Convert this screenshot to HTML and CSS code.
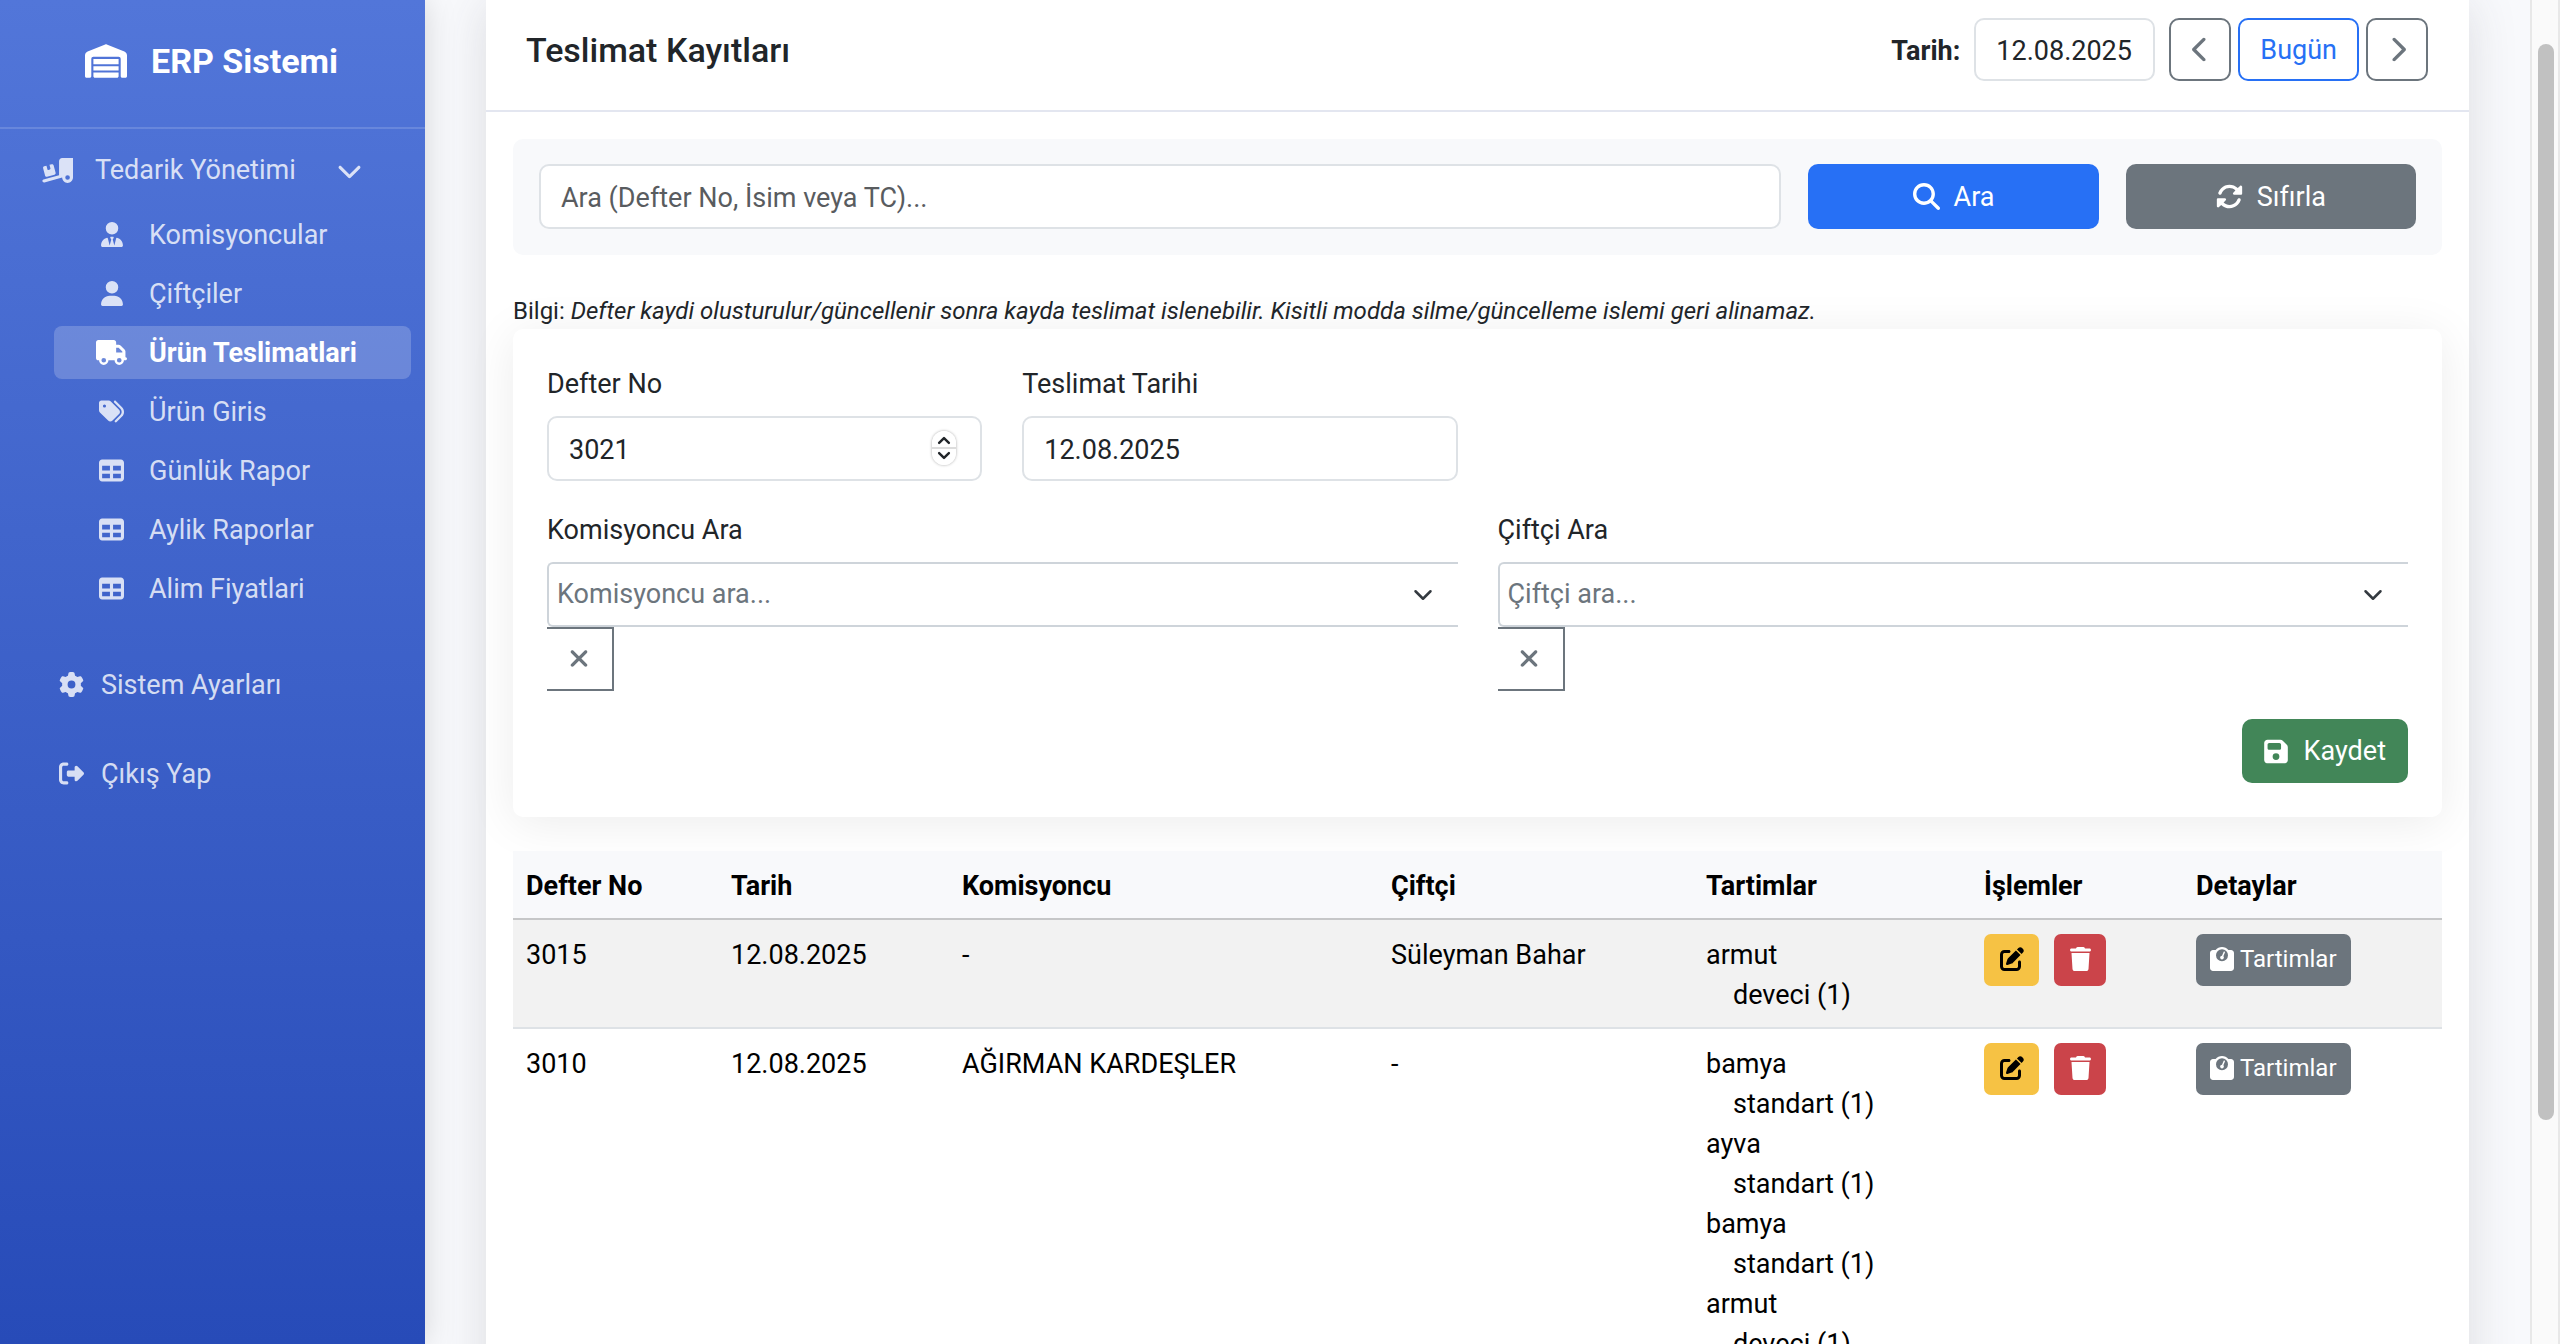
FILE: index.html
```html
<!DOCTYPE html>
<html lang="tr">
<head>
<meta charset="utf-8">
<title>ERP Sistemi</title>
<link rel="stylesheet" href="styles.css">
</head>
<body>
<svg class="sprite" aria-hidden="true">
<symbol id="warehouse" viewBox="0 0 640 512"><path d="M0 488V171.3c0-26.2 15.9-49.7 40.2-59.4L308.1 4.8c7.6-3.1 16.1-3.1 23.8 0L599.8 111.9c24.3 9.7 40.2 33.3 40.2 59.4V488c0 13.3-10.7 24-24 24H568c-13.3 0-24-10.7-24-24V224c0-17.7-14.3-32-32-32H128c-17.7 0-32 14.3-32 32V488c0 13.3-10.7 24-24 24H24c-13.3 0-24-10.7-24-24zm488 24l-336 0c-13.3 0-24-10.7-24-24V432H512l0 56c0 13.3-10.7 24-24 24zM128 400V336H512v64H128zm0-96V224H512l0 80H128z"/></symbol>
<symbol id="ramp" viewBox="0 0 640 512"><path d="M640 0V400c0 61.9-50.1 112-112 112c-61 0-110.5-48.7-112-109.3L48.4 502.9c-17.1 4.6-34.6-5.4-39.3-22.5s5.4-34.6 22.5-39.3L352 353.8V64c0-35.3 28.7-64 64-64H640zM576 400a48 48 0 1 0 -96 0 48 48 0 1 0 96 0zM23.1 207.7c-4.6-17.1 5.6-34.6 22.6-39.2l46.4-12.4 20.7 77.3c2.3 8.5 11.1 13.6 19.6 11.3l30.9-8.3c8.5-2.3 13.6-11.1 11.3-19.6l-20.7-77.3 46.4-12.4c17.1-4.6 34.6 5.6 39.2 22.6l41.4 154.5c4.6 17.1-5.6 34.6-22.6 39.2L103.7 384.9c-17.1 4.6-34.6-5.6-39.2-22.6L23.1 207.7z"/></symbol>
<symbol id="user-tie" viewBox="0 0 448 512"><path d="M224 256A128 128 0 1 1 224 0a128 128 0 1 1 0 256zM209.1 359.2l-18.6-31c-6.4-10.7 1.3-24.2 13.7-24.2H224h19.7c12.4 0 20.1 13.6 13.7 24.2l-18.6 31 33.4 123.9 36-146.9c2-8.1 9.8-13.4 17.9-11.3c70.1 17.6 121.9 81 121.9 156.4c0 17-13.8 30.7-30.7 30.7H285.5c-2.1 0-4-.4-5.8-1.1l.3 1.1H168l.3-1.1c-1.8 .7-3.8 1.1-5.8 1.1H30.7C13.8 512 0 498.2 0 481.3c0-75.5 51.9-138.9 121.9-156.4c8.1-2 15.9 3.3 17.9 11.3l36 146.9 33.4-123.9z"/></symbol>
<symbol id="user" viewBox="0 0 448 512"><path d="M224 256A128 128 0 1 0 224 0a128 128 0 1 0 0 256zm-45.7 48C79.8 304 0 383.8 0 482.3C0 498.7 13.3 512 29.7 512H418.3c16.4 0 29.7-13.3 29.7-29.7C448 383.8 368.2 304 269.7 304H178.3z"/></symbol>
<symbol id="truck" viewBox="0 0 640 512"><path d="M48 0C21.5 0 0 21.5 0 48V368c0 26.5 21.5 48 48 48H64c0 53 43 96 96 96s96-43 96-96H384c0 53 43 96 96 96s96-43 96-96h32c17.7 0 32-14.3 32-32s-14.3-32-32-32V288 256 237.3c0-17-6.7-33.3-18.7-45.3L512 114.7c-12-12-28.3-18.7-45.3-18.7H416V48c0-26.5-21.5-48-48-48H48zM416 160h50.7L544 237.3V256H416V160zM112 416a48 48 0 1 1 96 0 48 48 0 1 1 -96 0zm368-48a48 48 0 1 1 0 96 48 48 0 1 1 0-96z"/></symbol>
<symbol id="tags" viewBox="0 0 512 512"><path d="M345 39.1L472.8 168.4c52.4 53 52.4 138.2 0 191.2L360.8 472.9c-9.3 9.4-24.5 9.5-33.9 .2s-9.5-24.5-.2-33.9L438.6 325.9c33.9-34.3 33.9-89.4 0-123.7L310.9 72.9c-9.3-9.4-9.2-24.6 .2-33.9s24.6-9.2 33.9 .2zM0 229.5V80C0 53.5 21.5 32 48 32H197.5c17 0 33.3 6.7 45.3 18.7l168 168c25 25 25 65.5 0 90.5L277.3 442.7c-25 25-65.5 25-90.5 0l-168-168C6.7 262.7 0 246.5 0 229.5zM144 144a32 32 0 1 0 -64 0 32 32 0 1 0 64 0z"/></symbol>
<symbol id="table" viewBox="0 0 512 512"><path d="M64 256V160H224v96H64zm0 64H224v96H64V320zm224 96V320H448v96H288zM448 256H288V160H448v96zM64 32C28.7 32 0 60.7 0 96V416c0 35.3 28.7 64 64 64H448c35.3 0 64-28.7 64-64V96c0-35.3-28.7-64-64-64H64z"/></symbol>
<symbol id="gear" viewBox="0 0 512 512"><path d="M495.9 166.6c3.2 8.7 .5 18.4-6.4 24.6l-43.3 39.4c1.1 8.3 1.7 16.8 1.7 25.4s-.6 17.1-1.7 25.4l43.3 39.4c6.9 6.2 9.6 15.9 6.4 24.6c-4.4 11.9-9.7 23.3-15.8 34.3l-4.7 8.1c-6.6 11-14 21.4-22.1 31.2c-5.9 7.2-15.7 9.6-24.5 6.8l-55.7-17.7c-13.4 10.3-28.2 18.9-44 25.4l-12.5 57.1c-2 9.1-9 16.3-18.2 17.8c-13.8 2.3-28 3.5-42.5 3.5s-28.7-1.2-42.5-3.5c-9.2-1.5-16.2-8.7-18.2-17.8l-12.5-57.1c-15.8-6.5-30.6-15.1-44-25.4L83.1 425.9c-8.8 2.8-18.6 .3-24.5-6.8c-8.1-9.8-15.5-20.2-22.1-31.2l-4.7-8.1c-6.1-11-11.4-22.4-15.8-34.3c-3.2-8.7-.5-18.4 6.4-24.6l43.3-39.4C64.6 273.1 64 264.6 64 256s.6-17.1 1.7-25.4L22.4 191.2c-6.9-6.2-9.6-15.9-6.4-24.6c4.4-11.9 9.7-23.3 15.8-34.3l4.7-8.1c6.6-11 14-21.4 22.1-31.2c5.9-7.2 15.7-9.6 24.5-6.8l55.7 17.7c13.4-10.3 28.2-18.9 44-25.4l12.5-57.1c2-9.1 9-16.3 18.2-17.8C227.3 1.2 241.5 0 256 0s28.7 1.2 42.5 3.5c9.2 1.5 16.2 8.7 18.2 17.8l12.5 57.1c15.8 6.5 30.6 15.1 44 25.4l55.7-17.7c8.8-2.8 18.6-.3 24.5 6.8c8.1 9.8 15.5 20.2 22.1 31.2l4.7 8.1c6.1 11 11.4 22.4 15.8 34.3zM256 336a80 80 0 1 0 0-160 80 80 0 1 0 0 160z"/></symbol>
<symbol id="logout" viewBox="0 0 512 512"><path d="M377.9 105.9L500.7 228.7c7.2 7.2 11.3 17.1 11.3 27.3s-4.1 20.1-11.3 27.3L377.9 406.1c-6.4 6.4-15 9.9-24 9.9c-18.7 0-33.9-15.2-33.9-33.9l0-62.1-128 0c-17.7 0-32-14.3-32-32l0-64c0-17.7 14.3-32 32-32l128 0 0-62.1c0-18.7 15.2-33.9 33.9-33.9c9 0 17.6 3.6 24 9.9zM160 96L96 96c-17.7 0-32 14.3-32 32l0 256c0 17.7 14.3 32 32 32l64 0c17.7 0 32 14.3 32 32s-14.3 32-32 32l-64 0c-53 0-96-43-96-96L0 128C0 75 43 32 96 32l64 0c17.7 0 32 14.3 32 32s-14.3 32-32 32z"/></symbol>
<symbol id="down" viewBox="0 0 512 512"><path d="M233.4 406.6c12.5 12.5 32.8 12.5 45.3 0l192-192c12.5-12.5 12.5-32.8 0-45.3s-32.8-12.5-45.3 0L256 338.7 86.6 169.4c-12.5-12.5-32.8-12.5-45.3 0s-12.5 32.8 0 45.3l192 192z"/></symbol>
<symbol id="left" viewBox="0 0 320 512"><path d="M9.4 233.4c-12.5 12.5-12.5 32.8 0 45.3l192 192c12.5 12.5 32.8 12.5 45.3 0s12.5-32.8 0-45.3L77.3 256 246.6 86.6c12.5-12.5 12.5-32.8 0-45.3s-32.8-12.5-45.3 0l-192 192z"/></symbol>
<symbol id="right" viewBox="0 0 320 512"><path d="M310.6 233.4c12.5 12.5 12.5 32.8 0 45.3l-192 192c-12.5 12.5-32.8 12.5-45.3 0s-12.5-32.8 0-45.3L242.7 256 73.4 86.6c-12.5-12.5-12.5-32.8 0-45.3s32.8-12.5 45.3 0l192 192z"/></symbol>
<symbol id="search" viewBox="0 0 512 512"><path d="M416 208c0 45.9-14.9 88.3-40 122.7L502.6 457.4c12.5 12.5 12.5 32.8 0 45.3s-32.8 12.5-45.3 0L330.7 376c-34.4 25.2-76.8 40-122.7 40C93.1 416 0 322.9 0 208S93.1 0 208 0S416 93.1 416 208zM208 352a144 144 0 1 0 0-288 144 144 0 1 0 0 288z"/></symbol>
<symbol id="rotate" viewBox="0 0 512 512"><path d="M142.9 142.9c62.2-62.2 162.7-62.5 225.3-1L327 183c-6.9 6.9-8.9 17.2-5.2 26.2s12.5 14.8 22.2 14.8H463.5c0 0 0 0 0 0H472c13.3 0 24-10.7 24-24V72c0-9.7-5.8-18.5-14.8-22.2s-19.3-1.7-26.2 5.2L413.4 96.6c-87.6-86.5-228.7-86.2-315.8 1C73.2 122 55.6 150.7 44.8 181.4c-5.9 16.7 2.9 34.9 19.5 40.8s34.9-2.9 40.8-19.5c7.7-21.8 20.2-42.3 37.8-59.8zM16 312v7.6 .7V440c0 9.7 5.8 18.5 14.8 22.2s19.3 1.7 26.2-5.2l41.6-41.6c87.6 86.5 228.7 86.2 315.8-1c24.4-24.4 42.1-53.1 52.9-83.7c5.9-16.7-2.9-34.9-19.5-40.8s-34.9 2.9-40.8 19.5c-7.7 21.8-20.2 42.3-37.8 59.8c-62.2 62.2-162.7 62.5-225.3 1L185 329c6.9-6.9 8.9-17.2 5.2-26.2s-12.5-14.8-22.2-14.8H48.4h-.7H40c-13.3 0-24 10.7-24 24z"/></symbol>
<symbol id="close" viewBox="0 0 384 512"><path d="M342.6 150.6c12.5-12.5 12.5-32.8 0-45.3s-32.8-12.5-45.3 0L192 210.7 86.6 105.4c-12.5-12.5-32.8-12.5-45.3 0s-12.5 32.8 0 45.3L146.7 256 41.4 361.4c-12.5 12.5-12.5 32.8 0 45.3s32.8 12.5 45.3 0L192 301.3 297.4 406.6c12.5 12.5 32.8 12.5 45.3 0s12.5-32.8 0-45.3L237.3 256 342.6 150.6z"/></symbol>
<symbol id="save" viewBox="0 0 448 512"><path d="M64 32C28.7 32 0 60.7 0 96V416c0 35.3 28.7 64 64 64H384c35.3 0 64-28.7 64-64V173.3c0-17-6.7-33.3-18.7-45.3L352 50.7C340 38.7 323.7 32 306.7 32H64zm0 96c0-17.7 14.3-32 32-32H288c17.7 0 32 14.3 32 32v64c0 17.7-14.3 32-32 32H96c-17.7 0-32-14.3-32-32V128zM224 288a64 64 0 1 1 0 128 64 64 0 1 1 0-128z"/></symbol>
<symbol id="edit" viewBox="0 0 512 512"><path d="M471.6 21.7c-21.9-21.9-57.3-21.9-79.2 0L362.3 51.7l97.9 97.9 30.1-30.1c21.9-21.9 21.9-57.3 0-79.2L471.6 21.7zm-299.2 220c-6.1 6.1-10.8 13.6-13.5 21.9l-29.6 88.8c-2.9 8.6-.6 18.1 5.8 24.6s15.9 8.7 24.6 5.8l88.8-29.6c8.2-2.7 15.7-7.4 21.9-13.5L437.7 172.3 339.7 74.3 172.4 241.7zM96 64C43 64 0 107 0 160V416c0 53 43 96 96 96H352c53 0 96-43 96-96V320c0-17.7-14.3-32-32-32s-32 14.3-32 32v96c0 17.7-14.3 32-32 32H96c-17.7 0-32-14.3-32-32V160c0-17.7 14.3-32 32-32h96c17.7 0 32-14.3 32-32s-14.3-32-32-32H96z"/></symbol>
<symbol id="trash" viewBox="0 0 448 512"><path d="M135.2 17.7L128 32H32C14.3 32 0 46.3 0 64S14.3 96 32 96H416c17.7 0 32-14.3 32-32s-14.3-32-32-32H320l-7.2-14.3C307.4 6.8 296.3 0 284.2 0H163.8c-12.1 0-23.2 6.8-28.6 17.7zM416 128H32L53.2 467c1.6 25.3 22.6 45 47.9 45H346.9c25.3 0 46.3-19.7 47.9-45L416 128z"/></symbol>
<symbol id="scale" viewBox="0 0 512 512"><path d="M128 176a128 128 0 1 1 256 0 128 128 0 1 1 -256 0zM391.8 64C359.5 24.9 310.7 0 256 0S152.5 24.9 120.2 64H64C28.7 64 0 92.7 0 128V448c0 35.3 28.7 64 64 64H448c35.3 0 64-28.7 64-64V128c0-35.3-28.7-64-64-64H391.8zM296 224c0-10.6-4.1-20.2-10.9-27.4l33.6-78.3c3.5-8.1-.3-17.5-8.4-21s-17.5 .3-21 8.4L255.7 184c-22 .1-39.7 18-39.7 40c0 22.1 17.9 40 40 40s40-17.9 40-40z"/></symbol>
<symbol id="caret" viewBox="0 0 16 16"><path fill="none" stroke="currentColor" stroke-linecap="round" stroke-linejoin="round" d="m2 5 6 6 6-6"/></symbol>
</svg>
<div class="app">
  <nav class="sidebar" aria-label="Ana menü">
    <a class="brand" href="#"><svg class="icon icon-brand"><use href="#warehouse"/></svg><span>ERP Sistemi</span></a>
    <a class="group" href="#"><svg class="icon icon-wide"><use href="#ramp"/></svg><span>Tedarik Yönetimi</span><svg class="icon icon-chevron"><use href="#down"/></svg></a>
    <ul class="submenu">
      <li><a class="sub" href="#"><span class="slot"><svg class="icon icon-narrow"><use href="#user-tie"/></svg></span>Komisyoncular</a></li>
      <li><a class="sub" href="#"><span class="slot"><svg class="icon icon-narrow"><use href="#user"/></svg></span>Çiftçiler</a></li>
      <li><a class="sub active" href="#"><span class="slot"><svg class="icon icon-wide"><use href="#truck"/></svg></span>Ürün Teslimatlari</a></li>
      <li><a class="sub" href="#"><span class="slot"><svg class="icon icon-nav"><use href="#tags"/></svg></span>Ürün Giris</a></li>
      <li><a class="sub" href="#"><span class="slot"><svg class="icon icon-nav"><use href="#table"/></svg></span>Günlük Rapor</a></li>
      <li><a class="sub" href="#"><span class="slot"><svg class="icon icon-nav"><use href="#table"/></svg></span>Aylik Raporlar</a></li>
      <li><a class="sub" href="#"><span class="slot"><svg class="icon icon-nav"><use href="#table"/></svg></span>Alim Fiyatlari</a></li>
    </ul>
    <ul class="footer-menu">
      <li><a class="item" href="#"><svg class="icon icon-nav"><use href="#gear"/></svg>Sistem Ayarları</a></li>
      <li><a class="item" href="#"><svg class="icon icon-nav"><use href="#logout"/></svg>Çıkış Yap</a></li>
    </ul>
  </nav>

  <main class="content">
    <section class="panel">
      <header class="panel-head">
        <h1 class="title">Teslimat Kayıtları</h1>
        <div class="date-nav">
          <label class="date-label" for="day">Tarih:</label>
          <input class="field date-field" id="day" type="text" value="12.08.2025">
          <div class="date-buttons">
            <button class="btn btn-outline" type="button" aria-label="Önceki gün"><svg class="icon icon-arrow"><use href="#left"/></svg></button>
            <button class="btn btn-today" type="button">Bugün</button>
            <button class="btn btn-outline" type="button" aria-label="Sonraki gün"><svg class="icon icon-arrow"><use href="#right"/></svg></button>
          </div>
        </div>
      </header>
      <div class="panel-body">
        <form class="search">
          <input class="field" type="text" placeholder="Ara (Defter No, İsim veya TC)..." aria-label="Ara">
          <button class="btn btn-primary" type="button"><svg class="icon icon-btn"><use href="#search"/></svg>Ara</button>
          <button class="btn btn-secondary" type="button"><svg class="icon icon-btn"><use href="#rotate"/></svg>Sıfırla</button>
        </form>
        <p class="info">Bilgi: <em>Defter kaydi olusturulur/güncellenir sonra kayda teslimat islenebilir. Kisitli modda silme/güncelleme islemi geri alinamaz.</em></p>
        <form class="entry">
          <div class="quarter">
            <label class="label" for="book">Defter No</label>
            <div class="number">
              <input class="field" id="book" type="number" value="3021">
              <span class="spinner" aria-hidden="true"><svg class="spin-half spin-up"><use href="#caret"/></svg><svg class="spin-half"><use href="#caret"/></svg></span>
            </div>
          </div>
          <div class="quarter">
            <label class="label" for="date">Teslimat Tarihi</label>
            <input class="field" id="date" type="text" value="12.08.2025">
          </div>
          <div class="half half-first">
            <label class="label" for="agent">Komisyoncu Ara</label>
            <div class="picker"><select class="select" id="agent"><option>Komisyoncu ara...</option></select><svg class="picker-arrow"><use href="#caret"/></svg></div>
            <button class="clear" type="button" aria-label="Komisyoncu temizle"><svg class="icon icon-close"><use href="#close"/></svg></button>
          </div>
          <div class="half">
            <label class="label" for="farmer">Çiftçi Ara</label>
            <div class="picker"><select class="select" id="farmer"><option>Çiftçi ara...</option></select><svg class="picker-arrow"><use href="#caret"/></svg></div>
            <button class="clear" type="button" aria-label="Çiftçi temizle"><svg class="icon icon-close"><use href="#close"/></svg></button>
          </div>
          <div class="actions"><button class="btn btn-success" type="button"><svg class="icon icon-save"><use href="#save"/></svg>Kaydet</button></div>
        </form>
        <table class="records">
          <colgroup><col class="c-book"><col class="c-date"><col class="c-agent"><col class="c-farmer"><col class="c-weigh"><col class="c-ops"><col class="c-detail"></colgroup>
          <thead><tr><th>Defter No</th><th>Tarih</th><th>Komisyoncu</th><th>Çiftçi</th><th>Tartimlar</th><th>İşlemler</th><th>Detaylar</th></tr></thead>
          <tbody>
            <tr>
              <td>3015</td><td>12.08.2025</td><td>-</td><td>Süleyman Bahar</td>
              <td><div>armut</div><div class="kind">deveci (1)</div></td>
              <td><div class="ops"><button class="small small-edit" type="button" aria-label="Düzenle"><svg class="icon icon-small"><use href="#edit"/></svg></button><button class="small small-trash" type="button" aria-label="Sil"><svg class="icon icon-trash"><use href="#trash"/></svg></button></div></td>
              <td><div class="ops"><button class="small small-detail" type="button"><svg class="icon icon-small"><use href="#scale"/></svg>Tartimlar</button></div></td>
            </tr>
            <tr>
              <td>3010</td><td>12.08.2025</td><td>AĞIRMAN KARDEŞLER</td><td>-</td>
              <td><div>bamya</div><div class="kind">standart (1)</div><div>ayva</div><div class="kind">standart (1)</div><div>bamya</div><div class="kind">standart (1)</div><div>armut</div><div class="kind">deveci (1)</div></td>
              <td><div class="ops"><button class="small small-edit" type="button" aria-label="Düzenle"><svg class="icon icon-small"><use href="#edit"/></svg></button><button class="small small-trash" type="button" aria-label="Sil"><svg class="icon icon-trash"><use href="#trash"/></svg></button></div></td>
              <td><div class="ops"><button class="small small-detail" type="button"><svg class="icon icon-small"><use href="#scale"/></svg>Tartimlar</button></div></td>
            </tr>
          </tbody>
        </table>
      </div>
    </section>
  </main>
  <div class="scrollbar" aria-hidden="true"><div class="thumb"></div></div>
</div>
</body>
</html>
```
FILE: styles.css
```css
* { box-sizing: border-box; }

body {
  margin: 0;
  font: 27px/40px Roboto, sans-serif;
  color: #212529;
  background: #f8f9fc;
}

button, input, select { font: inherit; color: inherit; }
button { cursor: pointer; }
a { color: inherit; text-decoration: none; }
ul { list-style: none; margin: 0; padding: 0; }

.sprite { display: none; }
.icon { fill: currentColor; flex: none; display: block; }
.icon-brand { width: 42px; height: 34px; }
.icon-wide { width: 31px; height: 25px; }
.icon-nav { width: 25px; height: 25px; }
.icon-narrow { width: 22px; height: 25px; }
.icon-chevron { width: 25px; height: 25px; }
.icon-arrow { width: 17px; height: 27px; }
.icon-btn { width: 27px; height: 27px; }
.icon-save { width: 24px; height: 27px; }
.icon-close { width: 20px; height: 27px; }
.icon-small { width: 24px; height: 24px; }
.icon-trash { width: 21px; height: 24px; }

.app { display: flex; height: 100vh; overflow: hidden; }

/* Sidebar */
.sidebar {
  flex: none;
  width: 425px;
  color: rgba(255, 255, 255, .8);
  background: linear-gradient(180deg, #5276d9, #274bb8);
  box-shadow: 0 0 30px rgba(0, 0, 0, .15);
}
.brand {
  display: flex;
  align-items: center;
  justify-content: center;
  gap: 24px;
  height: 129px;
  padding: 0 2px 6px 0;
  border-bottom: 2px solid rgba(255, 255, 255, .15);
  color: #fff;
  font-size: 34px;
  font-weight: 700;
}
.group { display: flex; align-items: center; padding: 21px 42px 18px; gap: 22px; }
.group span { flex: 1; }
.group .icon-chevron { margin-right: 21px; }
.submenu { display: flex; flex-direction: column; gap: 6px; padding: 0 14px 0 54px; }
.sub { display: flex; align-items: center; height: 53px; padding-left: 40px; border-radius: 8px; }
.slot { display: flex; justify-content: center; width: 35px; margin-right: 20px; }
.active { background: rgba(255, 255, 255, .2); color: #fff; font-weight: 700; }
.footer-menu { display: flex; flex-direction: column; gap: 36px; padding: 43px 0 0 59px; }
.item { display: flex; align-items: center; gap: 17px; height: 53px; }

/* Page */
.content { flex: 1; min-width: 0; padding: 0 61px; overflow: hidden; }
.panel { background: #fff; min-height: 100%; box-shadow: 0 4px 46px rgba(58, 59, 69, .15); }
.panel-head {
  display: flex;
  align-items: center;
  justify-content: space-between;
  padding: 18px 41px 29px 40px;
  border-bottom: 2px solid #e3e6f0;
}
.title { margin: 0; font-size: 34px; font-weight: 500; }
.date-nav { display: flex; align-items: center; gap: 14px; }
.date-label { padding-top: 2px; font-weight: 700; }
.date-buttons { display: flex; gap: 7px; }
.panel-body { padding: 27px; }

.field {
  display: block;
  width: 100%;
  height: 65px;
  padding: 2px 20px 0;
  border: 2px solid #dee2e6;
  border-radius: 10px;
  background: #fff;
}
.field::placeholder { color: #595c5f; opacity: 1; }
.field[type="number"] { appearance: textfield; }
.field::-webkit-inner-spin-button { appearance: none; margin: 0; }
.date-field { width: 181px; height: 63px; }

.btn {
  display: flex;
  align-items: center;
  justify-content: center;
  gap: 14px;
  height: 65px;
  padding: 0 20px;
  border: 2px solid transparent;
  border-radius: 10px;
  background: #fff;
}
.date-buttons .btn { height: 63px; }
.btn-outline { width: 62px; border-color: #6c757d; color: #6c757d; }
.btn-today { border-color: #2770f5; color: #2770f5; }
.btn-primary { background: #2770f5; color: #fff; }
.btn-secondary { background: #6c757d; color: #fff; }
.btn-success { gap: 16px; height: 64px; background: #428658; color: #fff; }

.search {
  display: grid;
  grid-template-columns: repeat(12, 1fr);
  gap: 27px;
  padding: 25px 26px 26px;
  border-radius: 10px;
  background: #f8f9fb;
}
.search .field { grid-column: span 8; }
.search .btn { grid-column: span 2; }

.info { margin: 39px 0 0; padding-bottom: 1px; font-size: 24px; line-height: 34px; }

.entry {
  display: grid;
  grid-template-columns: repeat(4, 1fr);
  gap: 28px 40px;
  padding: 34px;
  border-radius: 10px;
  background: #fff;
  box-shadow: 0 6px 48px rgba(0, 0, 0, .08);
}
.half { grid-column: span 2; }
.half-first { grid-column: 1 / span 2; }
.actions { grid-column: 1 / -1; display: flex; justify-content: flex-end; }
.label { display: block; padding-top: 1px; margin-bottom: 12px; }

.number { position: relative; }
.spinner {
  position: absolute;
  top: 15px;
  right: 26px;
  width: 24px;
  height: 34px;
  border-radius: 12px;
  background: linear-gradient(#fff 16px, #ddd 16px, #ddd 18px, #fff 18px);
  box-shadow: 0 0 3px rgba(0, 0, 0, .35);
  display: flex;
  flex-direction: column;
  align-items: center;
  justify-content: space-between;
  padding: 3px 0;
}
.spin-half { width: 14px; height: 13px; stroke-width: 3px; }
.spin-up { transform: rotate(180deg); }

.picker { position: relative; }
.select {
  display: block;
  appearance: none;
  width: 100%;
  height: 65px;
  padding: 0 60px 2px 8px;
  border: 2px solid #ced4da;
  border-right: 0;
  border-radius: 6px 0 0 6px;
  background: #fff;
  color: #6c757d;
}
.picker-arrow { position: absolute; top: 23px; right: 25px; width: 20px; height: 20px; color: #343a40; stroke-width: 2px; }
.clear {
  display: flex;
  align-items: center;
  justify-content: center;
  width: 67px;
  height: 64px;
  padding: 0 2px 2px 0;
  border: 2px solid #6c757d;
  border-left: 0;
  background: #fff;
  color: #6c757d;
}

/* Delivery records */
.records { width: 100%; margin-top: 34px; table-layout: fixed; border-collapse: separate; border-spacing: 0; color: #000; }
.c-book { width: 205px; }
.c-date { width: 231px; }
.c-agent { width: 429px; }
.c-farmer { width: 315px; }
.c-weigh { width: 278px; }
.c-ops { width: 212px; }
.c-detail { width: 259px; }
.records th, .records td { padding: 15px 13px 12px; text-align: left; vertical-align: top; border-bottom: 2px solid #dee2e6; }
.records th { background: #f8f9fb; border-bottom-color: #c6c7c8; }
.records tbody tr:nth-child(odd) td { background: #f2f2f2; }
.kind { padding-left: 27px; }
.ops { display: flex; gap: 15px; margin-top: -1px; }
.small {
  display: flex;
  align-items: center;
  justify-content: center;
  gap: 6px;
  height: 52px;
  padding: 0 14px 2px;
  border: 0;
  border-radius: 7px;
  color: #fff;
  font-size: 24px;
}
.small-edit { width: 55px; background: #f6c244; color: #000; }
.small-trash { width: 52px; background: #cb444a; }
.small-detail { background: #6c757d; }

/* Scroll track */
.scrollbar { flex: none; width: 30px; padding: 44px 4px 0 6px; border: solid #e8e8e8; border-width: 0 2px; background: #fafafa; }
.thumb { height: 1076px; max-height: 83%; border-radius: 8px; background: #c1c1c1; }
```
